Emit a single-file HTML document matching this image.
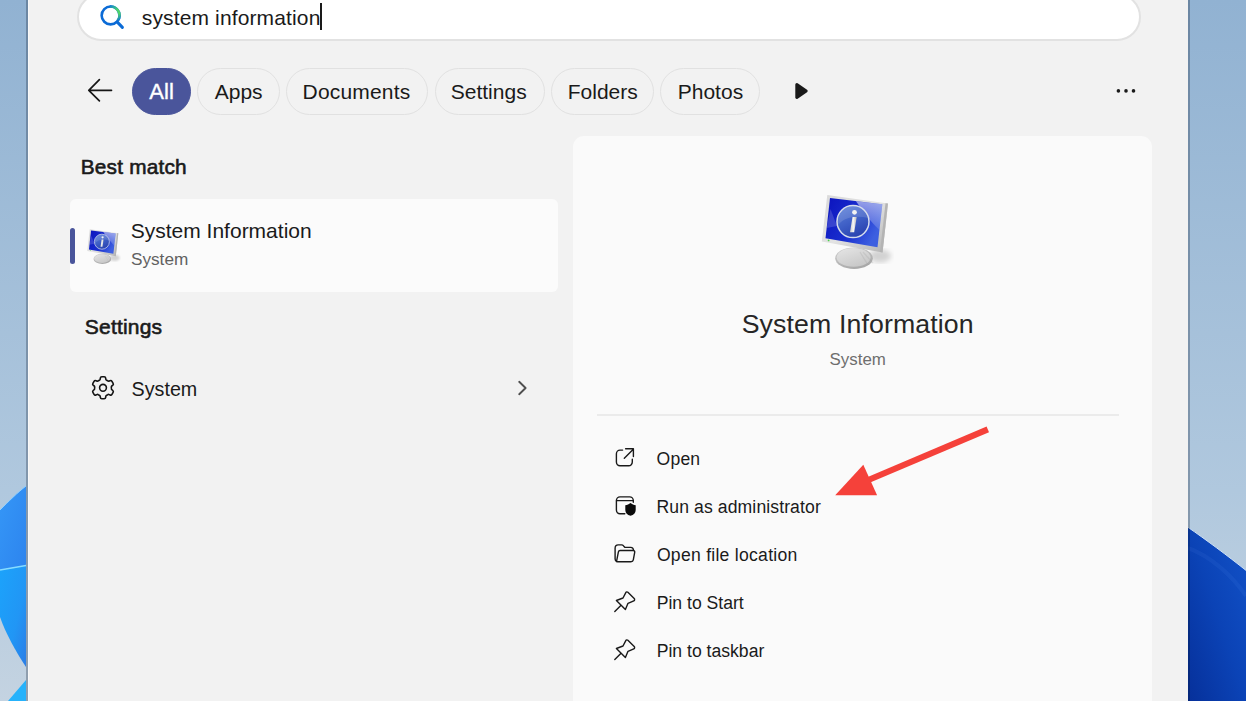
<!DOCTYPE html>
<html><head><meta charset="utf-8">
<style>
html,body{margin:0;padding:0;width:1246px;height:701px;overflow:hidden;}
body{position:relative;font-family:"Liberation Sans", sans-serif;background:#a6c1da;}
.abs{position:absolute;}
.t{position:absolute;white-space:nowrap;line-height:1;font-family:"Liberation Sans", sans-serif;}
#panel{position:absolute;left:28px;top:-20px;width:1160px;height:760px;background:#f2f2f2;box-shadow:inset 1px 0 0 #f9f9f9;}
#bl{position:absolute;left:26px;top:0;width:2px;height:701px;background:rgba(0,10,30,0.26);}
#br{position:absolute;left:1188px;top:0;width:2px;height:701px;background:rgba(0,10,30,0.26);}
#search{position:absolute;left:76.6px;top:-7px;width:1064.6px;height:48px;box-sizing:border-box;border:2px solid #e2e2e2;border-radius:24px;background:#fff;}
.pill{position:absolute;top:67.5px;height:47px;box-sizing:border-box;border:1px solid #e1e1e1;border-radius:23.5px;}
#card{position:absolute;left:70px;top:199px;width:488px;height:93px;background:#fbfbfb;border-radius:6px;}
#acc{position:absolute;left:70px;top:228px;width:5px;height:36px;background:#4a559b;border-radius:3px;}
#rp{position:absolute;left:573px;top:136px;width:579px;height:600px;background:#fafafa;border-radius:11px;}
#div{position:absolute;left:597px;top:414px;width:522px;height:2px;background:#ebebeb;}
#caret{position:absolute;left:320.4px;top:2.5px;width:2px;height:27.5px;background:#1a1a1a;}
</style></head><body>
<svg class="abs" style="left:0;top:0" width="1246" height="701" viewBox="0 0 1246 701">
 <defs>
  <linearGradient id="wp" x1="0" y1="0" x2="0" y2="1"><stop offset="0" stop-color="#91b2d2"/><stop offset="0.7" stop-color="#b0c8de"/><stop offset="1" stop-color="#c4d3e1"/></linearGradient>
  <linearGradient id="lb1" x1="0" y1="0" x2="1" y2="1"><stop offset="0" stop-color="#3597f7"/><stop offset="1" stop-color="#2d84ee"/></linearGradient>
  <linearGradient id="lb2" x1="0" y1="0" x2="1" y2="1"><stop offset="0" stop-color="#1ca3fb"/><stop offset="0.6" stop-color="#2196f5"/><stop offset="1" stop-color="#2b7de6"/></linearGradient>
  <linearGradient id="rb" x1="1" y1="0" x2="0" y2="1"><stop offset="0" stop-color="#1252c8"/><stop offset="0.5" stop-color="#0b43b6"/><stop offset="1" stop-color="#06309a"/></linearGradient>
 </defs>
 <rect x="0" y="0" width="1246" height="701" fill="url(#wp)"/>
 <path d="M26,486 C18,492 8,502 0,510 L0,570 L26,565.5 Z" fill="url(#lb1)"/>
 <path d="M0,570 L26,565.5 L26,667 C16,652 6,634 0,617 Z" fill="url(#lb2)"/>
 <path d="M0,570 L26,565.5" stroke="#86dcff" stroke-width="1.3"/>
 <path d="M26,486 C18,492 8,502 0,510" stroke="#8fd0ff" stroke-width="1" fill="none"/>
 <path d="M26,680 C20,687 14,694 8,701 L26,701 Z" fill="#26b2fb"/>
 <path d="M1188,527.3 C1205,539 1228,556 1246,570.4 V701 H1188 Z" fill="url(#rb)"/>
 <path d="M1188,548 C1210,556 1232,575 1246,596" stroke="rgba(120,170,255,0.08)" stroke-width="4" fill="none"/>
 <path d="M1188,527.3 C1205,539 1228,556 1246,570.4" stroke="#cfe2f6" stroke-width="1" fill="none"/>
</svg>
<div id="bl"></div><div id="br"></div>
<div id="panel"></div>
<div id="search"></div>
<div id="caret"></div>
<div class="pill" style="left:132px;width:59px;background:#4a559b;border-color:#4a559b"></div>
<div class="pill" style="left:197px;width:83px"></div>
<div class="pill" style="left:286px;width:142px"></div>
<div class="pill" style="left:434.5px;width:110.5px"></div>
<div class="pill" style="left:551px;width:102.5px"></div>
<div class="pill" style="left:660px;width:100px"></div>
<div id="card"></div><div id="acc"></div>
<div id="rp"></div>
<div id="div"></div>
<svg class="abs" style="left:0;top:0" width="1246" height="701" viewBox="0 0 1246 701">
 <defs>
  <linearGradient id="sg" x1="108" y1="6" x2="119" y2="21" gradientUnits="userSpaceOnUse"><stop offset="0" stop-color="#0a6fdb"/><stop offset="0.25" stop-color="#2bb0a0"/><stop offset="0.45" stop-color="#4fd46b"/><stop offset="0.7" stop-color="#4fd46b"/><stop offset="1" stop-color="#0a6fdb"/></linearGradient>
  <linearGradient id="frame" x1="0" y1="0" x2="1" y2="1"><stop offset="0" stop-color="#d9d9d9"/><stop offset="0.5" stop-color="#e3e3e3"/><stop offset="1" stop-color="#b3b3b3"/></linearGradient>
  <linearGradient id="scr" x1="0" y1="0" x2="1" y2="0.5"><stop offset="0" stop-color="#0b12bd"/><stop offset="0.6" stop-color="#1a2fcf"/><stop offset="1" stop-color="#3d5fe0"/></linearGradient>
  <linearGradient id="glare" x1="0" y1="0" x2="0" y2="1"><stop offset="0" stop-color="#ffffff" stop-opacity="0.55"/><stop offset="1" stop-color="#ffffff" stop-opacity="0.12"/></linearGradient>
  <linearGradient id="stand2" x1="0" y1="0" x2="0.6" y2="1"><stop offset="0" stop-color="#e6e6e6"/><stop offset="1" stop-color="#c8c8c8"/></linearGradient>
  <linearGradient id="istem" x1="0" y1="0" x2="1" y2="0"><stop offset="0" stop-color="#c9c9c9"/><stop offset="0.5" stop-color="#f6f6f6"/><stop offset="1" stop-color="#b9b9b9"/></linearGradient>
  <linearGradient id="circ" x1="0.2" y1="0" x2="0.7" y2="1"><stop offset="0" stop-color="#5b7fd8"/><stop offset="0.55" stop-color="#3c5cc4"/><stop offset="1" stop-color="#2840ad"/></linearGradient>
  <linearGradient id="stand" x1="0" y1="0" x2="0.5" y2="1"><stop offset="0" stop-color="#d0d0d0"/><stop offset="1" stop-color="#a9a9a9"/></linearGradient>
  <filter id="blur2"><feGaussianBlur stdDeviation="2.5"/></filter>
  
 </defs>
 <!-- search icon -->
 <circle cx="110.6" cy="15.4" r="8.95" fill="none" stroke="#0b6bd6" stroke-width="2.6"/>
 <path d="M109.8,6.5 A8.95,8.95 0 0 1 117.9,20.5" fill="none" stroke="url(#sg)" stroke-width="2.6"/>
 <path d="M117.6,22.4 L122.4,27.4" stroke="#0b6bd6" stroke-width="3" stroke-linecap="round"/>
 <!-- back arrow -->
 <path d="M111.5,90.3 H88.8 M99.4,79.6 L88.8,90.3 L99.4,100.9" fill="none" stroke="#161616" stroke-width="1.7" stroke-linecap="round" stroke-linejoin="round"/>
 <!-- play -->
 <path d="M796.8,84.6 L806.2,91 L796.8,97.4 Z" fill="#1a1a1a" stroke="#1a1a1a" stroke-width="3" stroke-linejoin="round"/>
 <!-- dots -->
 <circle cx="1118.4" cy="90.9" r="1.8" fill="#1a1a1a"/><circle cx="1126" cy="90.9" r="1.8" fill="#1a1a1a"/><circle cx="1133.5" cy="90.9" r="1.8" fill="#1a1a1a"/>
 <!-- monitor icons -->
 <g transform="translate(810,185)">
   <ellipse cx="70" cy="71" rx="11" ry="6.5" fill="rgba(0,0,0,0.16)" filter="url(#blur2)"/>
   
   <ellipse cx="44" cy="73.2" rx="18.8" ry="10.8" fill="url(#stand)"/>
   <ellipse cx="43.6" cy="72.4" rx="17" ry="9.3" fill="url(#stand2)"/>
   <path d="M50,67 L58,80 M53,67 L63,78" stroke="rgba(160,160,160,0.25)" stroke-width="1.2"/>
   <path d="M17.3,10 L78,18.5 L72.5,67.5 L11.8,56.5 Z" fill="url(#frame)"/>
   <path d="M75.5,18.2 L78,18.5 L72.5,67.5 L70,67 Z" fill="#b4b4b4"/>
   <path d="M20,13 L72.3,19.3 L67.5,62.2 L15.5,53.2 Z" fill="url(#scr)"/>
   <path d="M46,16.2 L72.3,19.3 L69.4,45 C62,38 54,28 46,16.2 Z" fill="url(#glare)"/>
   <path d="M20.5,24 L27,41 L16.6,43 Z" fill="rgba(255,255,255,0.16)"/>
   <circle cx="43" cy="36.6" r="16" fill="url(#circ)" stroke="#d5dcec" stroke-width="1.5"/>
   <path d="M28.5,40 C33,33 44,30 58.5,33 A15.2,15.2 0 0 0 28.5,40 Z" fill="rgba(255,255,255,0.13)"/>
   <circle cx="44.5" cy="27.3" r="2.4" fill="#f2f2f2"/>
   <path d="M42.5,32 L46.7,32 L44.2,47.2 L40,47.2 Z" fill="url(#istem)"/>
   <circle cx="18.6" cy="55.4" r="0.9" fill="#4ccf4c"/>
  </g>
 <g transform="translate(81.67,224.5) scale(0.47)">
   <ellipse cx="70" cy="71" rx="11" ry="6.5" fill="rgba(0,0,0,0.16)" filter="url(#blur2)"/>
   
   <ellipse cx="44" cy="73.2" rx="18.8" ry="10.8" fill="url(#stand)"/>
   <ellipse cx="43.6" cy="72.4" rx="17" ry="9.3" fill="url(#stand2)"/>
   <path d="M50,67 L58,80 M53,67 L63,78" stroke="rgba(160,160,160,0.25)" stroke-width="1.2"/>
   <path d="M17.3,10 L78,18.5 L72.5,67.5 L11.8,56.5 Z" fill="url(#frame)"/>
   <path d="M75.5,18.2 L78,18.5 L72.5,67.5 L70,67 Z" fill="#b4b4b4"/>
   <path d="M20,13 L72.3,19.3 L67.5,62.2 L15.5,53.2 Z" fill="url(#scr)"/>
   <path d="M46,16.2 L72.3,19.3 L69.4,45 C62,38 54,28 46,16.2 Z" fill="url(#glare)"/>
   <path d="M20.5,24 L27,41 L16.6,43 Z" fill="rgba(255,255,255,0.16)"/>
   <circle cx="43" cy="36.6" r="16" fill="url(#circ)" stroke="#d5dcec" stroke-width="1.5"/>
   <path d="M28.5,40 C33,33 44,30 58.5,33 A15.2,15.2 0 0 0 28.5,40 Z" fill="rgba(255,255,255,0.13)"/>
   <circle cx="44.5" cy="27.3" r="2.4" fill="#f2f2f2"/>
   <path d="M42.5,32 L46.7,32 L44.2,47.2 L40,47.2 Z" fill="url(#istem)"/>
   <circle cx="18.6" cy="55.4" r="0.9" fill="#4ccf4c"/>
  </g>
 <!-- gear -->
 <path d="M100.24,378.96 L100.32,378.18 Q100.46,376.79 101.86,376.79 L104.14,376.79 Q105.54,376.79 105.68,378.18 L105.76,378.96 Q105.86,379.95 106.66,380.30 A8.35,8.35 0 0 1 107.67,380.88 Q108.37,381.40 109.28,380.99 L109.99,380.67 Q111.26,380.09 111.96,381.31 L113.11,383.28 Q113.81,384.50 112.67,385.31 L112.04,385.77 Q111.22,386.35 111.33,387.22 A8.35,8.35 0 0 1 111.33,388.38 Q111.22,389.25 112.04,389.83 L112.67,390.29 Q113.81,391.10 113.11,392.32 L111.96,394.29 Q111.26,395.51 109.99,394.93 L109.28,394.61 Q108.37,394.20 107.67,394.72 A8.35,8.35 0 0 1 106.66,395.30 Q105.86,395.65 105.76,396.64 L105.68,397.42 Q105.54,398.81 104.14,398.81 L101.86,398.81 Q100.46,398.81 100.32,397.42 L100.24,396.64 Q100.14,395.65 99.34,395.30 A8.35,8.35 0 0 1 98.33,394.72 Q97.63,394.20 96.72,394.61 L96.01,394.93 Q94.74,395.51 94.04,394.29 L92.89,392.32 Q92.19,391.10 93.33,390.29 L93.96,389.83 Q94.78,389.25 94.67,388.38 A8.35,8.35 0 0 1 94.67,387.22 Q94.78,386.35 93.96,385.77 L93.33,385.31 Q92.19,384.50 92.89,383.28 L94.04,381.31 Q94.74,380.09 96.01,380.67 L96.72,380.99 Q97.63,381.40 98.33,380.88 A8.35,8.35 0 0 1 99.34,380.30 Q100.14,379.95 100.24,378.96 Z" fill="none" stroke="#141414" stroke-width="1.6" stroke-linejoin="round"/>
 <circle cx="103" cy="387.8" r="3.4" fill="none" stroke="#141414" stroke-width="1.6"/>
 <!-- chevron -->
 <path d="M519.2,381.8 L525.6,388 L519.2,394.2" fill="none" stroke="#4f4f4f" stroke-width="1.9" stroke-linecap="round" stroke-linejoin="round"/>
 <!-- open -->
 <g fill="none" stroke="#1a1a1a" stroke-width="1.4" stroke-linecap="round" stroke-linejoin="round">
  <path d="M622.6,450.1 H620 A3.6,3.6 0 0 0 616.4,453.7 V462.1 A3.6,3.6 0 0 0 620,465.7 H628.7 A3.6,3.6 0 0 0 632.3,462.1 V459.3"/>
  <path d="M624.3,458.3 L633.3,449.3 M625.6,448.7 H633.4 V456.6"/>
  <!-- run as admin window -->
  <path d="M624.8,513.7 H620 A3.6,3.6 0 0 1 616.4,510.1 V500.5 A3.6,3.6 0 0 1 620,496.9 H629.7 A3.6,3.6 0 0 1 633.3,500.5 V502.2"/>
  <path d="M616.6,500.6 H633.1"/>
  <!-- folder -->
  <path d="M616.6,561.5 C615.6,561 615.1,560.2 615.1,559.1 V548.2 C615.1,546.3 616.3,544.9 618.2,544.9 H621.6 C622.4,544.9 623.1,545.3 623.6,545.9 L625,547.4 H630.8 C632.2,547.4 633.2,548.4 633.5,549.8"/>
  <path d="M616.6,561.2 L618.4,551.9 C618.6,551 619.2,550.5 620,550.5 H633.2 C634.2,550.5 634.9,551.3 634.7,552.3 L633.3,559.8 C633.1,561 632.1,561.7 630.9,561.7 H617.6 C617,561.7 616.7,561.5 616.6,561.2 Z"/>
  <!-- pins -->
  <path d="M616.4,600.5 L623,598 L625.8,592.6 C626.2,591.8 627.2,591.6 627.9,592.3 L634.2,598.6 C634.9,599.3 634.7,600.4 633.8,600.8 L628,603.3 L625.4,609.5 Z M614.8,611.4 L620.8,605.4"/>
  <path transform="translate(0,48)" d="M616.4,600.5 L623,598 L625.8,592.6 C626.2,591.8 627.2,591.6 627.9,592.3 L634.2,598.6 C634.9,599.3 634.7,600.4 633.8,600.8 L628,603.3 L625.4,609.5 Z M614.8,611.4 L620.8,605.4"/>
 </g>
 <path d="M630.5,503.1 C629,504.4 627.2,505.1 625.3,505.3 V510 C625.3,513 627.3,514.8 630.5,515.8 C633.7,514.8 635.7,513 635.7,510 V505.3 C633.8,505.1 632,504.4 630.5,503.1 Z" fill="#0a0a0a"/>
 <!-- red arrow -->
 <path d="M987.8,429.3 L866,481" stroke="#f5413a" stroke-width="6.2" stroke-linecap="butt"/>
 <path d="M835.2,495.2 L863.3,464.8 L877.1,495.2 Z" fill="#f5413a"/>
</svg>
<div class="t" style="left:141.75px;top:7.22px;font-size:21px;color:#1a1a1a;letter-spacing:0.14px;">system information</div>
<div class="t" style="left:149.35px;top:80.78px;font-size:22px;color:#ffffff;-webkit-text-stroke:0.35px #ffffff;">All</div>
<div class="t" style="left:214.75px;top:81.22px;font-size:21px;color:#1a1a1a;">Apps</div>
<div class="t" style="left:302.55px;top:81.22px;font-size:21px;color:#1a1a1a;letter-spacing:0.18px;">Documents</div>
<div class="t" style="left:450.75px;top:81.22px;font-size:21px;color:#1a1a1a;">Settings</div>
<div class="t" style="left:567.75px;top:81.22px;font-size:21px;color:#1a1a1a;">Folders</div>
<div class="t" style="left:677.75px;top:81.22px;font-size:21px;color:#1a1a1a;">Photos</div>
<div class="t" style="left:80.74px;top:156.89px;font-size:20.8px;color:#1a1a1a;-webkit-text-stroke:0.6px #1a1a1a;letter-spacing:0.2px;">Best match</div>
<div class="t" style="left:130.75px;top:220.22px;font-size:21px;color:#1a1a1a;">System Information</div>
<div class="t" style="left:130.98px;top:251.04px;font-size:17.2px;color:#616161;">System</div>
<div class="t" style="left:84.83px;top:315.62px;font-size:21px;color:#1a1a1a;-webkit-text-stroke:0.6px #1a1a1a;letter-spacing:0.2px;">Settings</div>
<div class="t" style="left:131.60px;top:379.72px;font-size:19.7px;color:#1a1a1a;">System</div>
<div class="t" style="left:741.66px;top:311.40px;font-size:26.7px;color:#262626;letter-spacing:0.12px;">System Information</div>
<div class="t" style="left:829.58px;top:351.79px;font-size:16.9px;color:#6e6e6e;">System</div>
<div class="t" style="left:656.52px;top:450.90px;font-size:17.6px;color:#1a1a1a;letter-spacing:0.2px;">Open</div>
<div class="t" style="left:656.52px;top:499.10px;font-size:17.6px;color:#1a1a1a;letter-spacing:0.1px;">Run as administrator</div>
<div class="t" style="left:656.92px;top:547.10px;font-size:17.6px;color:#1a1a1a;letter-spacing:0.26px;">Open file location</div>
<div class="t" style="left:656.72px;top:594.70px;font-size:17.6px;color:#1a1a1a;">Pin to Start</div>
<div class="t" style="left:656.72px;top:642.90px;font-size:17.6px;color:#1a1a1a;">Pin to taskbar</div>
</body></html>
